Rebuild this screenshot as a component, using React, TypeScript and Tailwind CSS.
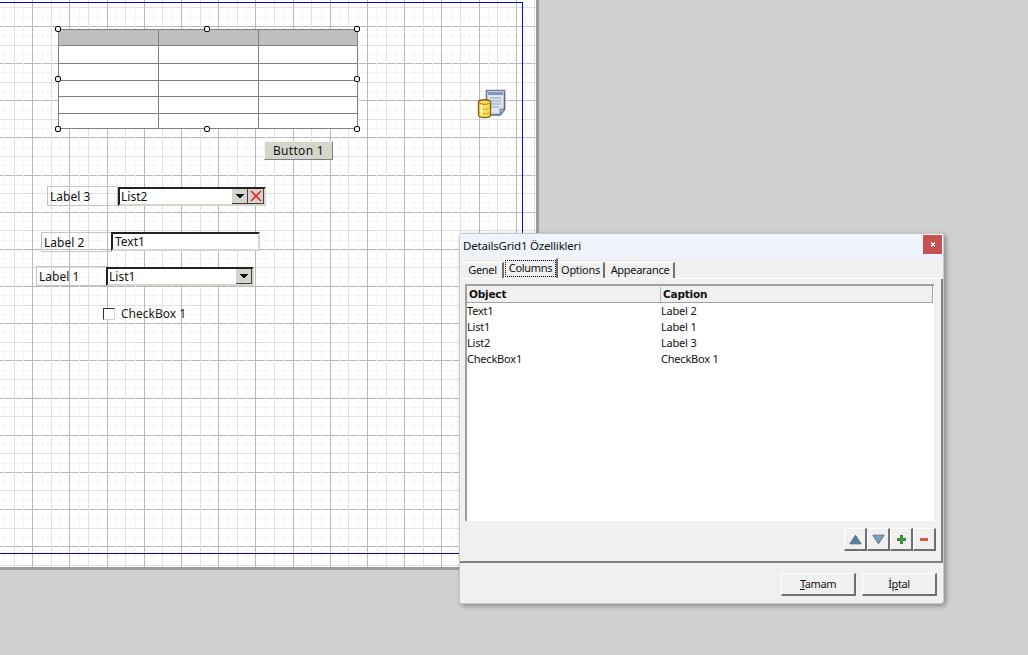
import type { ReactNode } from 'react';

const FONT = "font-['Noto_Sans',sans-serif]";

function range(start: number, step: number, count: number) {
  return Array.from({ length: count }, (_, i) => start + step * i);
}

function GridLines() {
  const xs = range(-5, 9.3, 60);
  const ys = range(-11.15, 9.2875, 64);
  const rank = (i: number) => (i % 4 === 0 ? 0 : i % 2 === 0 ? 1 : 2);
  const color = (i: number) => ['#b8b8b8', '#e0e0e0', '#f6f6f6'][rank(i)];
  const order = (a: number[]) => a.map((v, i) => ({ v: Math.round(v), i })).sort((p, q) => rank(q.i) - rank(p.i));
  return (
    <svg className="absolute left-0 top-0" width="536" height="567" shapeRendering="crispEdges">
      {order(ys).map(({ v, i }) => (
        <line key={'h' + i} x1="0" x2="536" y1={v + 0.5} y2={v + 0.5} stroke={color(i)} />
      ))}
      {order(xs).map(({ v, i }) => (
        <line key={'v' + i} y1="0" y2="567" x1={v + 0.5} x2={v + 0.5} stroke={color(i)} />
      ))}
      <path d="M0 2.5H522.5V553" fill="none" stroke="#0000ff" />
      <path d="M0 553.5H536" fill="none" stroke="#0000c8" />
    </svg>
  );
}

function Handle({ x, y }: { x: number; y: number }) {
  return <div className="absolute w-[6px] h-[6px] -ml-[3px] -mt-[3px] bg-[#f4f4f0] border border-black rounded-[2px]" style={{ left: x, top: y }} />;
}

function GridPreview() {
  const rows = [18, 17, 17, 17, 14];
  return (
    <>
      <div className="absolute left-[58px] top-[29px] w-[300px] h-[100px] bg-white border border-[#808080] flex flex-col">
        <div className="flex h-[16px] bg-[#bebebe] border-b border-[#808080] shrink-0">
          <div className="w-[100px] border-r border-[#808080]" />
          <div className="w-[100px] border-r border-[#808080]" />
          <div className="flex-1" />
        </div>
        {rows.map((h, i) => (
          <div key={i} className={`flex ${i < 4 ? 'border-b border-[#808080]' : ''}`} style={{ height: h }}>
            <div className="w-[100px] border-r border-[#808080]" />
            <div className="w-[100px] border-r border-[#808080]" />
            <div className="flex-1" />
          </div>
        ))}
      </div>
      <Handle x={58} y={29} />
      <Handle x={207} y={29} />
      <Handle x={357} y={29} />
      <Handle x={58} y={79} />
      <Handle x={357} y={79} />
      <Handle x={58} y={129} />
      <Handle x={207} y={129} />
      <Handle x={357} y={129} />
    </>
  );
}

function FormLabel({ x, y, w, h, children }: { x: number; y: number; w: number; h: number; children: ReactNode }) {
  return (
    <div className="absolute border border-[#c4c4c4] flex items-center pl-[2px] pt-[1px] text-[12px] text-[#111]" style={{ left: x, top: y, width: w, height: h }}>
      {children}
    </div>
  );
}

function Sunken({ x, y, w, h, children }: { x: number; y: number; w: number; h: number; children: ReactNode }) {
  return (
    <div className="absolute bg-white border-2 border-t-[#222] border-l-[#222] border-r-[#d5d5cd] border-b-[#d5d5cd] flex items-center pl-[1px] text-[12px] text-[#111]" style={{ left: x, top: y, width: w, height: h }}>
      {children}
    </div>
  );
}

function ComboButton({ children }: { children: ReactNode }) {
  return (
    <div className="w-[16px] h-full shrink-0 bg-[#d5d5cd] border-r border-b border-[#404040] flex items-center justify-center">
      {children}
    </div>
  );
}

const Arrow = () => (
  <svg width="8" height="5" viewBox="0 0 8 5" shapeRendering="crispEdges">
    <path d="M0 0h8L4 5z" fill="#111" />
  </svg>
);

function DbIcon() {
  return (
    <svg className="absolute left-[477px] top-[89px]" width="30" height="30" viewBox="0 0 30 30">
      <path d="M9.5 1.5H27.5V20L23 25.5H9.5Z" fill="#dfe5ef" stroke="#6d7f9f" strokeWidth="1.6" />
      <path d="M11 3h15v3H11z" fill="#8497b8" />
      <path d="M13 9h11M13 12h11M13 15h11M13 18h9" stroke="#8fa0bd" />
      <path d="M23 25.5V20H27.5Z" fill="#aab6cb" stroke="#6d7f9f" />
      <path d="M27.8 4V21L24 26.5H12" fill="none" stroke="#3d4a62" strokeOpacity="0.5" />
      <path d="M1.5 13c0-3 12-3 12 0v13c0 3.4-12 3.4-12 0Z" fill="#f7dd5a" stroke="#8a5a12" strokeWidth="1.3" />
      <path d="M2 13.5c1.5 2.4 10 2.4 11 0" fill="none" stroke="#a9791c" />
      <path d="M2 18.5c1.5 2.4 10 2.4 11 0M2 23c1.5 2.4 10 2.4 11 0" fill="none" stroke="#d9a520" />
      <path d="M4.5 16v10" stroke="#fff8c8" strokeWidth="2" />
    </svg>
  );
}

function DesignCanvas() {
  return (
    <div className="absolute left-0 top-0 w-[539px] h-[570px] bg-white border-r-[3px] border-b-[3px] border-[#9c9c9c] overflow-hidden">
      <GridLines />
      <GridPreview />
      <DbIcon />
      <div className="absolute left-[264px] top-[141px] w-[69px] h-[19px] bg-[#d5d5cd] border border-t-[#f4f4f0] border-l-[#f4f4f0] border-r-[#808080] border-b-[#808080] flex items-center justify-center text-[12px] text-[#111] tracking-[0.3px]">
        Button 1
      </div>

      <FormLabel x={47} y={186} w={71} h={20}>Label 3</FormLabel>
      <Sunken x={118} y={187} w={148} h={19}>
        <span className="flex-1">List2</span>
        <ComboButton><Arrow /></ComboButton>
        <ComboButton>
          <svg width="12" height="12" viewBox="0 0 12 12">
            <path d="M1 1l10 10M11 1L1 11" stroke="#e8242a" strokeWidth="1.6" />
          </svg>
        </ComboButton>
      </Sunken>

      <FormLabel x={41} y={232} w={71} h={20}>Label 2</FormLabel>
      <Sunken x={111} y={232} w={149} h={19}>
        <span className="pl-[1px] pt-[1px]">Text1</span>
      </Sunken>

      <FormLabel x={36} y={266} w={71} h={20}>Label 1</FormLabel>
      <Sunken x={106} y={267} w={148} h={19}>
        <span className="flex-1">List1</span>
        <ComboButton><Arrow /></ComboButton>
      </Sunken>

      <div className="absolute left-[103px] top-[308px] w-[12px] h-[12px] bg-white border border-t-[#333] border-l-[#333] border-r-[#d5d5cd] border-b-[#d5d5cd]" />
      <div className="absolute left-[121px] top-[305px] text-[12px] leading-[17px] text-[#222]">CheckBox 1</div>
    </div>
  );
}

function Tab({ label, active, w }: { label: string; active?: boolean; w: number }) {
  if (active) {
    return (
      <div className="h-[20px] bg-[#f0f0f0] border-t border-l border-white border-r-2 border-r-[#707070] pt-[1px] relative z-10 shrink-0" style={{ width: w }}>
        <div className="h-[17px] border border-dotted border-black flex items-center justify-center text-[11px] tracking-[-0.3px]">{label}</div>
      </div>
    );
  }
  return (
    <div className="h-[16px] border-r-2 border-r-[#707070] border-t border-t-white flex items-center justify-center text-[11px] tracking-[-0.3px] shrink-0" style={{ width: w }}>
      {label}
    </div>
  );
}

function ToolButton({ children }: { children: ReactNode }) {
  return (
    <div className="w-[23px] h-[23px] bg-[#f0f0f0] border border-t-white border-l-white border-r-[#707070] border-b-[#707070] border-r-2 border-b-2 flex items-center justify-center">
      {children}
    </div>
  );
}

function DialogButton({ children }: { children: ReactNode }) {
  return (
    <div className="w-[75px] h-[23px] bg-[#f0f0f0] border border-t-white border-l-white border-r-[#707070] border-b-[#707070] border-r-2 border-b-2 flex items-center justify-center text-[11px] tracking-[-0.4px]">
      {children}
    </div>
  );
}

const COLUMNS = [
  ['Text1', 'Label 2'],
  ['List1', 'Label 1'],
  ['List2', 'Label 3'],
  ['CheckBox1', 'CheckBox 1'],
];

function Dialog() {
  return (
    <div className="absolute left-[459px] top-[233px] w-[485px] h-[371px] bg-[#f0f0f0] border border-[#c8c8c8] rounded-[3px] shadow-[2px_2px_5px_rgba(0,0,0,0.35)] text-[#111] flex flex-col">
      <div className="h-[24px] shrink-0 flex items-start justify-between bg-[#eef3fc]">
        <div className="text-[11.5px] tracking-[-0.2px] leading-[23px] pl-[3px]">DetailsGrid1 Özellikleri</div>
        <div className="w-[19px] h-[19px] mt-[1px] mr-[1px] bg-[#c75050] flex items-center justify-center">
          <svg width="6" height="5" viewBox="0 0 8 7" shapeRendering="crispEdges">
            <path d="M0 0h2l2 2 2-2h2L5 3.5 8 7H6L4 5 2 7H0l3-3.5z" fill="#fff" />
          </svg>
        </div>
      </div>

      <div className="h-[20px] shrink-0 flex items-end pl-[3px]">
        <Tab label="Genel" w={41} />
        <Tab label="Columns" w={54} active />
        <Tab label="Options" w={47} />
        <div className="w-[2px]" />
        <Tab label="Appearance" w={68} />
      </div>

      <div className="flex-1 border-t border-white flex flex-col">
        <div className="h-[5px]" />
        <div className="ml-[5px] w-[469px] h-[237px] bg-white border-l-2 border-t-2 border-[#a0a0a0] flex flex-col text-[11px] tracking-[-0.2px]">
          <div className="h-[17px] w-[466px] shrink-0 bg-[#f0f0f0] border-b border-[#a0a0a0] border-r flex items-center font-['DejaVu_Sans',sans-serif] font-bold text-[10.5px] tracking-[-0.2px]">
            <div className="w-[194px] pl-[2px] border-r border-[#b0b0b0] h-[15px] leading-[15px]">Object</div>
            <div className="pl-[2px] leading-[15px] h-[15px]">Caption</div>
          </div>
          <div>
            {COLUMNS.map(([obj, cap]) => (
              <div key={obj} className="flex h-[16px] items-center">
                <div className="w-[194px]">{obj}</div>
                <div>{cap}</div>
              </div>
            ))}
          </div>
        </div>

        <div className="flex justify-end pt-[7px] pr-[7px] h-[30px]">
          <ToolButton>
            <svg width="13" height="11" viewBox="0 0 15 12"><path d="M7.500 1L14 11H1z" fill="#4f82ac" stroke="#5f6670" /></svg>
          </ToolButton>
          <ToolButton>
            <svg width="13" height="11" viewBox="0 0 15 12"><path d="M1 1H14L7.500 11z" fill="#6fa3cb" stroke="#5f6670" /></svg>
          </ToolButton>
          <ToolButton>
            <svg width="9" height="9" viewBox="0 0 10 10" shapeRendering="crispEdges"><path d="M3.500 0h3v3.500H10v3H6.500V10h-3V6.500H0v-3h3.500z" fill="#3f9a3f" stroke="#2f6f2f" strokeWidth="0.5" /></svg>
          </ToolButton>
          <ToolButton>
            <svg width="8" height="3" viewBox="0 0 8 3" shapeRendering="crispEdges"><path d="M0 0h8v3H0z" fill="#dc5a3c" /></svg>
          </ToolButton>
        </div>

        <div className="mt-[10px] h-[2px] bg-[#808080] shrink-0" />
        <div className="flex-1 flex justify-end gap-[6px] pt-[10px] pr-[6px]">
          <DialogButton><span><u>T</u>amam</span></DialogButton>
          <DialogButton><span>İ<u>p</u>tal</span></DialogButton>
        </div>
      </div>
      <div className="absolute right-[0px] top-[45px] w-[2px] h-[284px] bg-[#808080]" />
    </div>
  );
}

export default function App() {
  return (
    <div className={`relative w-[1028px] h-[655px] bg-[#d0d0d0] overflow-hidden ${FONT}`}>
      <DesignCanvas />
      <Dialog />
    </div>
  );
}
